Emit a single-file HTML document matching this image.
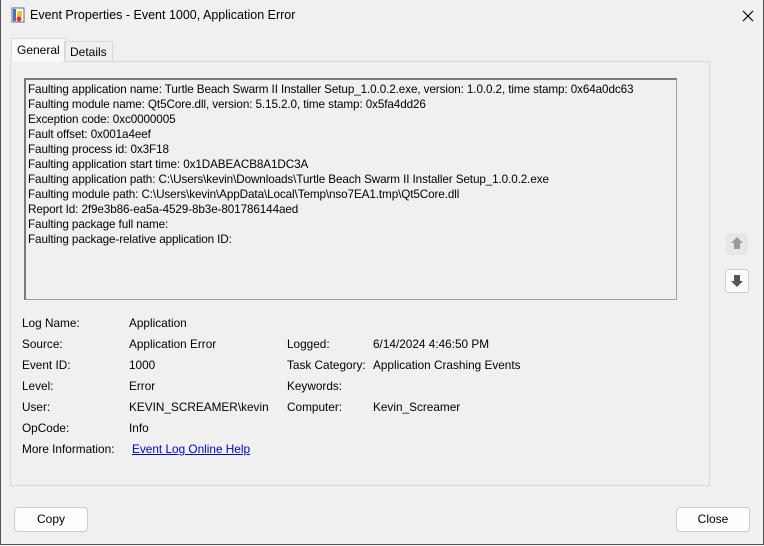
<!DOCTYPE html>
<html><head><style>
body{margin:0;width:764px;height:546px;background:#f0f0f0;font-family:"Liberation Sans",sans-serif;font-size:12px;color:#000;position:relative;overflow:hidden}
.win{position:absolute;left:0;top:0;width:762px;height:544px;border:1px solid #555;border-top:none;background:#f0f0f0}
.title{position:absolute;left:30px;top:8px;font-size:12.5px}
.x{position:absolute;left:741px;top:6px;font-size:15px;font-weight:300}
.tab{position:absolute;top:39px;height:22px;line-height:22px;padding:0 5px;font-size:12px}
.panel{position:absolute;left:10px;top:61px;width:698px;height:423px;border:1px solid #d9d9d9;background:#f0f0f0}
.box{position:absolute;left:24px;top:78px;width:650px;height:219px;border:1px solid #a0a0a0;border-top:2px solid #7a7a7a;border-left:2px solid #7a7a7a;background:#f0f0f0}
.txt{position:absolute;left:28px;top:82px;line-height:15px;font-size:11.7px;white-space:pre;letter-spacing:-0.1px}
.l{position:absolute;font-size:11.8px}
.btn{position:absolute;top:507px;width:72px;height:23px;border:1px solid #ccc;border-radius:4px;background:#fdfdfd;text-align:center;line-height:23px}
.arr{position:absolute;left:726px;width:22px;height:22px;border-radius:3px}
a{color:#0000cc;text-decoration:underline}
</style></head><body>
<div class="win"></div>
<svg style="position:absolute;left:10px;top:7px" width="16" height="16"><rect x="2" y="1" width="12" height="14" fill="#fff" stroke="#667"/><rect x="3" y="2" width="3" height="12" fill="#4a6fbf"/><rect x="7" y="4" width="5" height="6" fill="#f2c12e"/><circle cx="9" cy="12" r="2.5" fill="#d33"/></svg>
<div class="title">Event Properties - Event 1000, Application Error</div>
<svg class="x" width="12" height="12" style="left:742px;top:10px"><path d="M1 1 L11 11 M11 1 L1 11" stroke="#000" stroke-width="1.2"/></svg>
<div class="tab" style="left:11px;top:38px;background:#f9f9f9;border:1px solid #d9d9d9;border-bottom:none;height:23px">General</div>
<div class="tab" style="left:64px;top:41px;border:1px solid #d9d9d9;border-bottom:none;height:19px;line-height:20px">Details</div>
<div class="panel"></div>
<div style="position:absolute;left:12px;top:60px;width:51px;height:2px;background:#f9f9f9"></div>
<div class="box"></div>
<div class="txt">Faulting application name: Turtle Beach Swarm II Installer Setup_1.0.0.2.exe, version: 1.0.0.2, time stamp: 0x64a0dc63
Faulting module name: Qt5Core.dll, version: 5.15.2.0, time stamp: 0x5fa4dd26
Exception code: 0xc0000005
Fault offset: 0x001a4eef
Faulting process id: 0x3F18
Faulting application start time: 0x1DABEACB8A1DC3A
Faulting application path: C:\Users\kevin\Downloads\Turtle Beach Swarm II Installer Setup_1.0.0.2.exe
Faulting module path: C:\Users\kevin\AppData\Local\Temp\nso7EA1.tmp\Qt5Core.dll
Report Id: 2f9e3b86-ea5a-4529-8b3e-801786144aed
Faulting package full name: 
Faulting package-relative application ID: </div>
<div class="l" style="left:22px;top:316px">Log Name:</div><div class="l" style="left:129px;top:316px">Application</div>
<div class="l" style="left:22px;top:337px">Source:</div><div class="l" style="left:129px;top:337px">Application Error</div>
<div class="l" style="left:287px;top:337px">Logged:</div><div class="l" style="left:373px;top:337px">6/14/2024 4:46:50 PM</div>
<div class="l" style="left:22px;top:358px">Event ID:</div><div class="l" style="left:129px;top:358px">1000</div>
<div class="l" style="left:287px;top:358px">Task Category:</div><div class="l" style="left:373px;top:358px">Application Crashing Events</div>
<div class="l" style="left:22px;top:379px">Level:</div><div class="l" style="left:129px;top:379px">Error</div>
<div class="l" style="left:287px;top:379px">Keywords:</div>
<div class="l" style="left:22px;top:400px">User:</div><div class="l" style="left:129px;top:400px">KEVIN_SCREAMER\kevin</div>
<div class="l" style="left:287px;top:400px">Computer:</div><div class="l" style="left:373px;top:400px">Kevin_Screamer</div>
<div class="l" style="left:22px;top:421px">OpCode:</div><div class="l" style="left:129px;top:421px">Info</div>
<div class="l" style="left:22px;top:442px">More Information:</div><div class="l" style="left:132px;top:442px"><a>Event Log Online Help</a></div>
<div class="arr" style="top:233px;background:#e6e6e6"><svg width="22" height="22"><path d="M11 4 L17 10 H14 V16 H8 V10 H5 Z" fill="#9a9a9a"/></svg></div>
<div class="arr" style="top:269px;background:#fbfbfb;border:1px solid #ccc;left:725px"><svg width="22" height="22"><path d="M11 17 L17 11 H14 V5 H8 V11 H5 Z" fill="#555"/></svg></div>
<div class="btn" style="left:14px">Copy</div>
<div class="btn" style="left:676px">Close</div>
</body></html>
